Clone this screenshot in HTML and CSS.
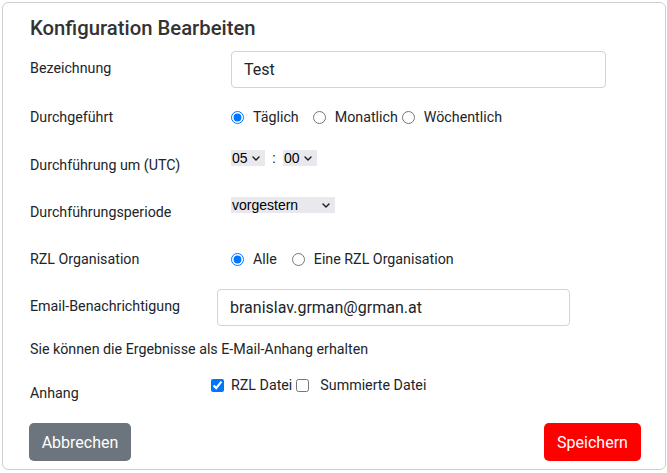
FILE: index.html
```html
<!DOCTYPE html>
<html lang="de">
<head>
<meta charset="utf-8">
<title>Konfiguration Bearbeiten</title>
<link rel="stylesheet" href="styles.css">
</head>
<body>
<div class="modal">
  <h1 class="title">Konfiguration Bearbeiten</h1>

  <div class="row row-name">
    <div class="label label-up">Bezeichnung</div>
    <input class="text-input input-name" type="text" value="Test">
  </div>

  <div class="row row-done">
    <div class="label">Durchgeführt</div>
    <div class="choices">
      <input type="radio" name="freq" id="f1" checked><label for="f1" class="opt opt-wide">Täglich</label>
      <input type="radio" name="freq" id="f2"><label for="f2" class="opt opt-tight">Monatlich</label>
      <input type="radio" name="freq" id="f3"><label for="f3" class="opt">Wöchentlich</label>
    </div>
  </div>

  <div class="row row-top row-time">
    <div class="label label-low">Durchführung um (UTC)</div>
    <div class="time">
      <div class="select">05<svg class="chev" viewBox="0 0 8 5" width="8" height="5"><path d="M1 1l3 3 3-3"/></svg></div>
      <span class="colon">:</span>
      <div class="select">00<svg class="chev" viewBox="0 0 8 5" width="8" height="5"><path d="M1 1l3 3 3-3"/></svg></div>
    </div>
  </div>

  <div class="row row-top row-period">
    <div class="label label-low">Durchführungsperiode</div>
    <div class="select select-wide">vorgestern<svg class="chev" viewBox="0 0 8 5" width="8" height="5"><path d="M1 1l3 3 3-3"/></svg></div>
  </div>

  <div class="row row-org">
    <div class="label">RZL Organisation</div>
    <div class="choices">
      <input type="radio" name="org" id="o1" checked><label for="o1" class="opt opt-alle">Alle</label>
      <input type="radio" name="org" id="o2"><label for="o2" class="opt">Eine RZL Organisation</label>
    </div>
  </div>

  <div class="row row-mail">
    <div class="label label-up label-mail">Email-Benachrichtigung</div>
    <input class="text-input input-mail" type="text" value="branislav.grman@grman.at">
  </div>

  <p class="hint">Sie können die Ergebnisse als E-Mail-Anhang erhalten</p>

  <div class="row row-top row-attach">
    <div class="label label-attach">Anhang</div>
    <div class="choices">
      <input type="checkbox" id="c1" checked><label for="c1" class="opt opt-check">RZL Datei</label>
      <input type="checkbox" id="c2"><label for="c2" class="opt opt-check2">Summierte Datei</label>
    </div>
  </div>

  <div class="footer">
    <button class="btn btn-cancel">Abbrechen</button>
    <button class="btn btn-save">Speichern</button>
  </div>
</div>
</body>
</html>
```

FILE: styles.css
```css
* { box-sizing: border-box; }

html, body {
  margin: 0;
  background: #ffffff;
}

body {
  font-family: Roboto, "Liberation Sans", Arial, sans-serif;
  color: #212529;
  font-size: 14.25px;
  width: 667px;
  height: 473px;
  overflow: hidden;
}

.modal {
  margin: 2px 0 0 2px;
  width: 664px;
  height: 468px;
  border: 1px solid #d0d0d0;
  border-radius: 6px;
  padding: 0 24px 0 27px;
  display: flex;
  flex-direction: column;
}

.title {
  margin: 13px 0 0 0;
  font-size: 20.3px;
  line-height: 24px;
  font-weight: 500;
  color: #333333;
}

.row {
  display: flex;
  align-items: center;
}

.row-top { align-items: flex-start; }

.label {
  width: 201px;
  flex: none;
  line-height: 20px;
}

.label-up { margin-top: -3px; }
.label-low { margin-top: 5px; }
.label-mail { width: 187px; }
.label-attach { margin-top: 8px; width: 181px; }

.text-input {
  height: 37px;
  border: 1px solid #ced4da;
  border-radius: 4px;
  padding: 0 12px;
  font-family: Roboto, "Liberation Sans", Arial, sans-serif;
  font-size: 16px;
  color: #212529;
  background: #fff;
  outline: none;
}

.input-name { width: 375px; }
.input-mail { width: 353px; }

.row-name { margin-top: 11px; height: 37px; }
.row-done { margin-top: 17px; height: 24px; }
.row-time { margin-top: 21px; height: 24px; }
.row-period { margin-top: 23px; height: 24px; }
.row-org { margin-top: 26px; height: 24px; }
.row-mail { margin-top: 18px; height: 37px; }
.row-attach { margin-top: 16px; height: 28px; }

.choices {
  display: flex;
  align-items: center;
  height: 20px;
}

input[type="radio"], input[type="checkbox"] {
  margin: 0;
  width: 13px;
  height: 13px;
  flex: none;
}

.opt {
  margin-left: 9px;
  line-height: 20px;
}

.opt-wide { margin-right: 14px; }
.opt-tight { margin-right: 4px; }
.opt-alle { margin-right: 15px; }
.opt-check { margin-left: 7px; margin-right: 4px; }
.opt-check2 { margin-left: 11px; }

.time {
  display: flex;
  align-items: center;
}

.select {
  display: flex;
  align-items: center;
  justify-content: space-between;
  height: 16px;
  width: 34px;
  padding: 0 5px 0 1px;
  background: #e9e9ed;
  font-family: "Liberation Sans", Arial, sans-serif;
  font-size: 14px;
  line-height: 16px;
  color: #000;
}

.select-wide { width: 104px; }

.chev {
  fill: none;
  stroke: #1a1a1a;
  stroke-width: 1.4;
  stroke-linecap: round;
  stroke-linejoin: round;
}

.colon {
  width: 18px;
  text-align: center;
  font-family: "Liberation Sans", Arial, sans-serif;
  font-size: 14px;
}

.hint {
  margin: 13px 0 0 0;
  line-height: 20px;
}

.footer {
  margin-top: 20px;
  display: flex;
  justify-content: space-between;
}

.btn {
  height: 38px;
  border: none;
  border-radius: 5px;
  font-family: Roboto, "Liberation Sans", Arial, sans-serif;
  font-size: 16px;
  color: #fff;
  padding: 0 12px;
}

.btn-cancel {
  background: #6c757d;
  width: 102px;
  margin-left: -1px;
}

.btn-save {
  background: #ff0000;
  width: 97px;
}
```
